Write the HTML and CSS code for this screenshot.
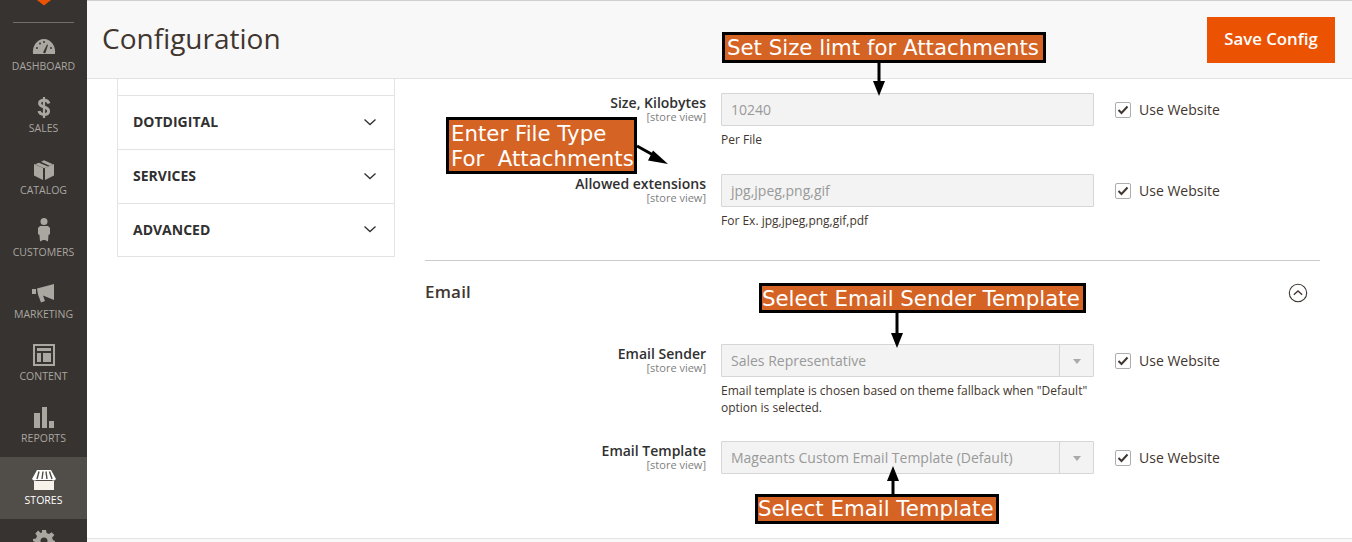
FILE: index.html
```html
<!DOCTYPE html>
<html lang="en">
<head>
    <meta charset="UTF-8">
    <meta name="viewport" content="width=device-width, initial-scale=1.0">
    <title>Configuration</title>
    <link rel="stylesheet" href="styles.css">
</head>
<body>
    <div class="page">
        <aside class="sidebar">
            <div class="logo-wrap">
                <svg class="logo" width="14" height="6" viewBox="0 0 14 6"><path d="M0 0h14L7 5.500z" fill="#eb5202"/></svg>
            </div>
            <nav class="menu">
                <a class="menu-item" href="#">
                    <span class="menu-icon">
                        <svg width="24" height="18" viewBox="0 0 24 18"><path d="M1 16C0 8 5 1 12 1s12 7 11 15z" fill="#aaa6a0"/><path d="M11 14.500l4-8 1 .5-2.800 8.500z" fill="#373330"/><circle cx="5" cy="10" r="1" fill="#373330"/><circle cx="8" cy="5.500" r="1" fill="#373330"/><circle cx="12" cy="4" r="1" fill="#373330"/><circle cx="19" cy="10" r="1" fill="#373330"/></svg>
                    </span>
                    <span class="menu-label">Dashboard</span>
                </a>
                <a class="menu-item" href="#">
                    <span class="menu-icon">
                        <svg width="14" height="21" viewBox="0 0 14 21"><path d="M12 6.500C11.200 4 9.500 3.300 7 3.300 4.500 3.300 2.600 4.300 2.600 6.300 2.600 8.500 4.500 9.300 7 10c2.500.7 4.600 1.500 4.600 4 0 2.200-2 3.500-4.600 3.500-2.700 0-4.400-1-5-3.500" fill="none" stroke="#aaa6a0" stroke-width="3"/><path d="M7 0v21" stroke="#aaa6a0" stroke-width="2.200"/></svg>
                    </span>
                    <span class="menu-label">Sales</span>
                </a>
                <a class="menu-item" href="#">
                    <span class="menu-icon">
                        <svg width="20" height="21" viewBox="0 0 20 21"><path d="M0 5l9 4v12l-9-4.500zM20 5l-9 4v12l9-4.500z" fill="#aaa6a0"/><path d="M5 3.800l9.500 4L10 9.200 1 5.300zM7 2.800L10 1.200l9 4-3 1.700z" fill="#aaa6a0"/></svg>
                    </span>
                    <span class="menu-label">Catalog</span>
                </a>
                <a class="menu-item" href="#">
                    <span class="menu-icon">
                        <svg width="12" height="24" viewBox="0 0 12 24"><circle cx="6" cy="3.500" r="3.500" fill="#aaa6a0"/><path d="M2 8h8l2 2v6l-1.500 1-.5 6.500-3-1.500H5l-3 1.500L1.500 17 0 16v-6z" fill="#aaa6a0"/></svg>
                    </span>
                    <span class="menu-label">Customers</span>
                </a>
                <a class="menu-item" href="#">
                    <span class="menu-icon">
                        <svg width="23" height="20" viewBox="0 0 23 20"><path d="M0 5h4v5H0z" fill="#aaa6a0"/><path d="M5 4.500L22 0v16L11 11.500l2 5.500-4 1.500-3-8z" fill="#aaa6a0"/></svg>
                    </span>
                    <span class="menu-label">Marketing</span>
                </a>
                <a class="menu-item" href="#">
                    <span class="menu-icon">
                        <svg width="22" height="22" viewBox="0 0 22 22"><path d="M0 0h22v22H0zM2 2v18h18V2z" fill="#aaa6a0"/><path d="M4 4h14v3H4zM4 9h4v9H4zM10 9h8v9h-8z" fill="#aaa6a0"/></svg>
                    </span>
                    <span class="menu-label">Content</span>
                </a>
                <a class="menu-item" href="#">
                    <span class="menu-icon">
                        <svg width="20" height="21" viewBox="0 0 20 21"><path d="M0 6h6v15H0zM8 0h5v21H8zM15 14h5v7h-5z" fill="#aaa6a0"/></svg>
                    </span>
                    <span class="menu-label">Reports</span>
                </a>
                <a class="menu-item active" href="#">
                    <span class="menu-icon">
                        <svg width="24" height="20" viewBox="0 0 24 20"><path d="M5 0h14l5 9q-2 2.500-4 1H4Q2 11.500 0 9z" fill="#fff"/><path d="M2 11h20v9H2z" fill="#f7f3eb"/><path d="M7 1.500L5 9M11 1.500L10 9M14 1.500L15 9M17.500 1.500L20 9" stroke="#514d49" stroke-width="1.400"/></svg>
                    </span>
                    <span class="menu-label">Stores</span>
                </a>
                <a class="menu-item" href="#">
                    <span class="menu-icon">
                        <svg width="22" height="22" viewBox="0 0 22 22"><path d="M9 0h4l.6 3 2.400 1 2.600-1.700 2.800 2.800L19 7.700l1 2.400 2 .9v4l-3 .6-1 2.400 1.700 2.600-2.800 2.800L14.300 19l-2.300 1-1 2H9l-.6-3-2.400-1-2.600 1.700-2.800-2.800L3 14.300 2 12l-2-1V9l3-.6 1-2.400-1.700-2.600L5.100.6 7.700 3 9 2.500z" fill="#aaa6a0"/><circle cx="11" cy="11" r="3.500" fill="#373330"/></svg>
                    </span>
                </a>
            </nav>
        </aside>

        <main class="main">
            <header class="page-header">
                <h1>Configuration</h1>
                <button class="save-button">Save Config</button>
            </header>

            <div class="page-body">
                <ul class="tabs">
                    <li class="tab-cut"></li>
                    <li>Dotdigital <svg class="chevron" width="14" height="8" viewBox="0 0 14 8"><path d="M1.500 1.500L7 6.500l5.500-5" fill="none" stroke="#303030" stroke-width="1.300"/></svg></li>
                    <li>Services <svg class="chevron" width="14" height="8" viewBox="0 0 14 8"><path d="M1.500 1.500L7 6.500l5.500-5" fill="none" stroke="#303030" stroke-width="1.300"/></svg></li>
                    <li>Advanced <svg class="chevron" width="14" height="8" viewBox="0 0 14 8"><path d="M1.500 1.500L7 6.500l5.500-5" fill="none" stroke="#303030" stroke-width="1.300"/></svg></li>
                </ul>

                <section class="config">
                    <div class="form-row">
                        <div class="field-label"><strong>Size, Kilobytes</strong><span>[store view]</span></div>
                        <div class="field-control">
                            <div class="input">10240</div>
                            <p class="note">Per File</p>
                        </div>
                        <label class="use-website"><span class="checkbox"><svg width="12" height="10" viewBox="0 0 12 10"><path d="M1.500 5l3 3 6-6.500" fill="none" stroke="#41362f" stroke-width="2"/></svg></span>Use Website</label>
                    </div>
                    <div class="form-row">
                        <div class="field-label"><strong>Allowed extensions</strong><span>[store view]</span></div>
                        <div class="field-control">
                            <div class="input">jpg,jpeg,png,gif</div>
                            <p class="note">For Ex. jpg,jpeg,png,gif,pdf</p>
                        </div>
                        <label class="use-website"><span class="checkbox"><svg width="12" height="10" viewBox="0 0 12 10"><path d="M1.500 5l3 3 6-6.500" fill="none" stroke="#41362f" stroke-width="2"/></svg></span>Use Website</label>
                    </div>

                    <div class="section-title">
                        <h2>Email</h2>
                        <svg class="collapse-icon" width="20" height="20" viewBox="0 0 20 20"><circle cx="10" cy="10" r="8.700" fill="none" stroke="#41362f" stroke-width="1.100"/><path d="M5.800 11.800L10 8l4.200 3.800" fill="none" stroke="#41362f" stroke-width="1.300"/></svg>
                    </div>

                    <div class="form-row form-row-tight">
                        <div class="field-label"><strong>Email Sender</strong><span>[store view]</span></div>
                        <div class="field-control">
                            <div class="input select">Sales Representative</div>
                            <p class="note">Email template is chosen based on theme fallback when "Default" option is selected.</p>
                        </div>
                        <label class="use-website"><span class="checkbox"><svg width="12" height="10" viewBox="0 0 12 10"><path d="M1.500 5l3 3 6-6.500" fill="none" stroke="#41362f" stroke-width="2"/></svg></span>Use Website</label>
                    </div>
                    <div class="form-row">
                        <div class="field-label"><strong>Email Template</strong><span>[store view]</span></div>
                        <div class="field-control">
                            <div class="input select">Mageants Custom Email Template (Default)</div>
                        </div>
                        <label class="use-website"><span class="checkbox"><svg width="12" height="10" viewBox="0 0 12 10"><path d="M1.500 5l3 3 6-6.500" fill="none" stroke="#41362f" stroke-width="2"/></svg></span>Use Website</label>
                    </div>
                </section>
            </div>
            <div class="page-footer"></div>
        </main>
    </div>

    <!-- callouts drawn on top of the screenshot -->
    <div class="callout callout-size">Set Size limt for Attachments</div>
    <div class="callout callout-type">Enter File Type<br>For&nbsp; Attachments</div>
    <div class="callout callout-sender">Select Email Sender Template</div>
    <div class="callout callout-template">Select Email Template</div>
    <svg class="arrows" width="1352" height="542" viewBox="0 0 1352 542">
        <path d="M879 62v20" stroke="#000" stroke-width="3"/><path d="M873 81h12l-6 15z"/>
        <path d="M637 146l18 10" stroke="#000" stroke-width="3"/><path d="M653 150.500l15 13.500-20-3.500z"/>
        <path d="M897 312v22" stroke="#000" stroke-width="3"/><path d="M891 333h12l-6 15z"/>
        <path d="M893 494v-14" stroke="#000" stroke-width="3"/><path d="M887 481h12l-6-15z"/>
    </svg>
</body>
</html>
```

FILE: styles.css
```css
* {
    box-sizing: border-box;
}
html, body {
    height: 100%;
}
body {
    font-family: 'Open Sans', sans-serif;
    margin: 0;
    padding: 0;
    background: white;
    color: #41362f;
    overflow: hidden;
    position: relative;
}
.page {
    display: flex;
    height: 542px;
}

/* sidebar */
.sidebar {
    width: 87px;
    flex-shrink: 0;
    background: #373330;
    overflow: hidden;
}
.logo-wrap {
    height: 23px;
    margin: 0 13px;
    border-bottom: 1px solid #736e69;
    display: flex;
    justify-content: center;
    align-items: flex-start;
}
.menu-item {
    height: 62px;
    display: flex;
    flex-direction: column;
    align-items: center;
    text-decoration: none;
    color: #aaa6a0;
    flex-shrink: 0;
}
.menu-icon {
    height: 35px;
    display: flex;
    align-items: flex-end;
    justify-content: center;
    padding-bottom: 2px;
}
.menu-label {
    font-size: 10.500px;
    line-height: 16px;
    text-transform: uppercase;
}
.menu-item.active {
    background: #514d49;
    color: white;
}

/* main */
.main {
    flex: 1;
    display: flex;
    flex-direction: column;
    min-width: 0;
}
.page-header {
    height: 79px;
    flex-shrink: 0;
    display: flex;
    justify-content: space-between;
    align-items: center;
    padding: 0 17px 0 15px;
    background: #f8f8f8;
    border-top: 1px solid #d0d0d0;
    border-bottom: 1px solid #e3e3e3;
}
.page-header h1 {
    margin: 0 0 4px;
    font-size: 28px;
    font-weight: 400;
}
.save-button {
    width: 128px;
    height: 46px;
    padding: 0 0 2px;
    background: #eb5202;
    color: white;
    border: none;
    font-family: inherit;
    font-size: 16.800px;
    font-weight: 600;
}
.page-body {
    flex: 1;
    display: flex;
    padding-left: 30px;
    min-height: 0;
}
.page-footer {
    height: 4px;
    flex-shrink: 0;
    background: #f8f8f8;
    border-top: 1px solid #e3e3e3;
}

/* left tabs */
.tabs {
    list-style: none;
    width: 278px;
    flex-shrink: 0;
    align-self: flex-start;
    margin: 0;
    padding: 0;
    border: 1px solid #e3e3e3;
    border-top: none;
}
.tabs li {
    height: 54px;
    padding: 0 17px 2px 15px;
    display: flex;
    justify-content: space-between;
    align-items: center;
    font-size: 14px;
    font-weight: 700;
    color: #303030;
    text-transform: uppercase;
    border-bottom: 1px solid #e3e3e3;
}
.tabs .tab-cut {
    height: 17px;
    padding-bottom: 0;
}
.tabs li:last-child {
    height: 52px;
    padding-bottom: 2px;
    border-bottom: none;
}

/* form */
.config {
    width: 895px;
    margin-left: 30px;
    padding-top: 14px;
}
.form-row {
    display: flex;
    margin-bottom: 26px;
}
.form-row-tight {
    margin-bottom: 25px;
}
.field-label {
    width: 281px;
    flex-shrink: 0;
    display: flex;
    flex-direction: column;
    align-items: flex-end;
    padding-top: 1px;
}
.field-label strong {
    font-size: 14px;
    font-weight: 600;
    line-height: 17px;
    color: #303030;
}
.field-label span {
    font-size: 11px;
    line-height: 12px;
    color: #808080;
}
.field-control {
    width: 373px;
    margin-left: 15px;
    flex-shrink: 0;
}
.input {
    height: 33px;
    padding: 0 9px;
    display: flex;
    align-items: center;
    font-size: 14px;
    color: #999;
    background: #f3f3f3;
    border: 1px solid #d6d6d6;
    border-radius: 1px;
}
.select {
    position: relative;
}
.select::before {
    content: '';
    position: absolute;
    top: 0;
    bottom: 0;
    right: 33px;
    border-left: 1px solid #d6d6d6;
}
.select::after {
    content: '';
    position: absolute;
    top: 14px;
    right: 12px;
    border: 4px solid transparent;
    border-top: 5px solid #aaa;
    border-bottom: none;
}
.note {
    margin: 5px 0 0;
    font-size: 12px;
    line-height: 17px;
    color: #41362f;
}
.use-website {
    margin-left: 21px;
    height: 33px;
    display: flex;
    align-items: center;
    font-size: 14px;
    color: #41362f;
}
.checkbox {
    width: 16px;
    height: 16px;
    margin-right: 8px;
    display: flex;
    align-items: center;
    justify-content: center;
    border: 1px solid #adadad;
    border-radius: 2px;
    background: white;
}
.section-title {
    margin-top: 31px;
    height: 84px;
    padding: 21px 12px 0 0;
    display: flex;
    justify-content: space-between;
    align-items: flex-start;
    border-top: 1px solid #cccccc;
}
.section-title h2 {
    margin: 0;
    font-size: 17px;
    font-weight: 600;
    line-height: 20px;
    letter-spacing: 0.200px;
}
.collapse-icon {
    margin-top: 1px;
}

/* callouts */
.callout {
    position: absolute;
    background: #d56324;
    border: 3px solid #000;
    color: white;
    font-family: 'DejaVu Sans', sans-serif;
    font-size: 21.300px;
    line-height: 25px;
    padding: 0 0 0 2px;
    white-space: nowrap;
}
.callout-size {
    left: 722px;
    top: 32px;
    width: 324px;
    height: 31px;
}
.callout-type {
    left: 446px;
    top: 117px;
    width: 191px;
    height: 57px;
    padding-top: 1px;
}
.callout-sender {
    left: 759px;
    top: 283px;
    width: 327px;
    height: 30px;
    padding-left: 0;
}
.callout-template {
    left: 755px;
    top: 494px;
    width: 244px;
    height: 30px;
    padding-left: 0;
    line-height: 23px;
}
.arrows {
    position: absolute;
    left: 0;
    top: 0;
    pointer-events: none;
}
```
